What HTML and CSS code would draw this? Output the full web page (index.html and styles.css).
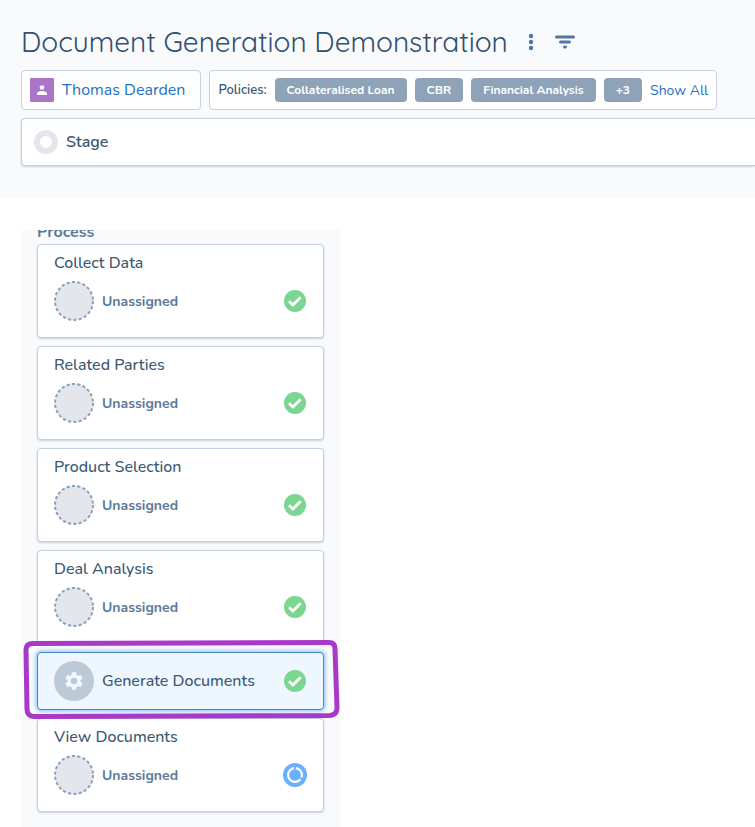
FILE: index.html
```html
<!DOCTYPE html>
<html lang="en">
<head>
  <meta charset="UTF-8" />
  <meta name="viewport" content="width=device-width, initial-scale=1" />
  <title>Document Generation Demonstration</title>
  <link rel="stylesheet" href="styles.css">
</head>
<body>

  <!-- shared icons -->
  <svg class="sprite" aria-hidden="true">
    <symbol id="icon-check" viewBox="0 0 24 24">
      <circle cx="12" cy="12" r="11" fill="#7ad690" />
      <path d="M6 12.2l3.9 3.9 7.8-7.8" fill="none" stroke="#fff" stroke-width="2.8" />
    </symbol>
    <symbol id="icon-progress" viewBox="0 0 24 24">
      <circle cx="12" cy="12" r="12" fill="#68b0ff" />
      <circle cx="12" cy="12" r="6.9" fill="none" stroke="#fff" stroke-width="2.2" />
      <path d="M12 3v4M16.5 14.5l4 2.4" stroke="#68b0ff" stroke-width="1.8" />
    </symbol>
    <symbol id="icon-empty" viewBox="0 0 40 40">
      <circle cx="20" cy="20" r="19" fill="#e3e7ec" stroke="#8aa2bb" stroke-width="2" stroke-dasharray="3.2 2.227" />
    </symbol>
    <symbol id="icon-gear" viewBox="0 0 24 24">
      <path fill="#f0f7ff" d="M19.14 12.94c.04-.3.06-.61.06-.94s-.02-.64-.07-.94l2.03-1.58a.49.49 0 0 0 .12-.61l-1.92-3.32a.488.488 0 0 0-.59-.22l-2.39.96c-.5-.38-1.03-.7-1.62-.94l-.36-2.54a.484.484 0 0 0-.48-.41h-3.84c-.24 0-.43.17-.47.41l-.36 2.54c-.59.24-1.13.57-1.62.94l-2.39-.96c-.22-.08-.47 0-.59.22L2.74 8.87c-.12.21-.08.47.12.61l2.03 1.58c-.05.3-.09.63-.09.94s.02.64.07.94l-2.03 1.58a.49.49 0 0 0-.12.61l1.92 3.32c.12.22.37.29.59.22l2.39-.96c.5.38 1.03.7 1.62.94l.36 2.54c.05.24.24.41.48.41h3.84c.24 0 .44-.17.47-.41l.36-2.54c.59-.24 1.13-.56 1.62-.94l2.39.96c.22.08.47 0 .59-.22l1.92-3.32a.49.49 0 0 0-.12-.61l-2.01-1.58zM12 15.6A3.6 3.6 0 1 1 12 8.4a3.6 3.6 0 0 1 0 7.2z" />
    </symbol>
  </svg>

  <header class="page-header">
    <div class="title-row">
      <h1>Document Generation Demonstration</h1>
      <button class="icon-btn" type="button" aria-label="More options">
        <svg width="6" height="18" viewBox="0 0 6 18" fill="#4a78a8">
          <circle cx="3" cy="3" r="2.2" /><circle cx="3" cy="9" r="2.2" /><circle cx="3" cy="15" r="2.2" />
        </svg>
      </button>
      <button class="icon-btn" type="button" aria-label="Filter">
        <svg width="22" height="14" viewBox="0 0 22 14" fill="none" stroke="#55779d" stroke-width="3" stroke-linecap="round">
          <path d="M2.5 2h17M6.5 7h9M10.5 12h1" />
        </svg>
      </button>
    </div>

    <div class="info-row">
      <div class="box">
        <span class="avatar">
          <svg width="10" height="10" viewBox="0 0 10 10" fill="#fff">
            <circle cx="5" cy="2.5" r="2.3" /><path d="M0 10V8.5C0 6.8 3 6 5 6s5 .8 5 2.5V10z" />
          </svg>
        </span>
        <a class="person" href="#">Thomas Dearden</a>
      </div>
      <div class="box">
        <span class="policies">Policies:</span>
        <span class="tag">Collateralised Loan</span>
        <span class="tag">CBR</span>
        <span class="tag">Financial Analysis</span>
        <span class="tag">+3</span>
        <a class="show-all" href="#">Show All</a>
      </div>
    </div>

    <div class="stage">
      <span class="ring"></span>
      <span>Stage</span>
    </div>
  </header>

  <aside class="process">
    <h2>Process</h2>
    <ul class="tasks">
      <li class="task">
        <h3>Collect Data</h3>
        <div class="task-row">
          <svg class="circle" aria-hidden="true"><use href="#icon-empty" /></svg>
          <span class="assignee">Unassigned</span>
          <svg class="status" role="img" aria-label="Complete"><use href="#icon-check" /></svg>
        </div>
      </li>
      <li class="task">
        <h3>Related Parties</h3>
        <div class="task-row">
          <svg class="circle" aria-hidden="true"><use href="#icon-empty" /></svg>
          <span class="assignee">Unassigned</span>
          <svg class="status" role="img" aria-label="Complete"><use href="#icon-check" /></svg>
        </div>
      </li>
      <li class="task">
        <h3>Product Selection</h3>
        <div class="task-row">
          <svg class="circle" aria-hidden="true"><use href="#icon-empty" /></svg>
          <span class="assignee">Unassigned</span>
          <svg class="status" role="img" aria-label="Complete"><use href="#icon-check" /></svg>
        </div>
      </li>
      <li class="task">
        <h3>Deal Analysis</h3>
        <div class="task-row">
          <svg class="circle" aria-hidden="true"><use href="#icon-empty" /></svg>
          <span class="assignee">Unassigned</span>
          <svg class="status" role="img" aria-label="Complete"><use href="#icon-check" /></svg>
        </div>
      </li>
      <li class="task active">
        <div class="task-row">
          <span class="circle auto"><svg width="22" height="22"><use href="#icon-gear" /></svg></span>
          <h3>Generate Documents</h3>
          <svg class="status" role="img" aria-label="Complete"><use href="#icon-check" /></svg>
        </div>
        <svg class="highlight" viewBox="0 0 318 82" aria-hidden="true">
          <path d="M11 4.5L307 3.5Q313 3.5 313 10L315 69Q315 76 308 76.5L12 77.5Q5 77.5 5 70L4 11Q4 4.5 11 4.5Z" />
        </svg>
      </li>
      <li class="task">
        <h3>View Documents</h3>
        <div class="task-row">
          <svg class="circle" aria-hidden="true"><use href="#icon-empty" /></svg>
          <span class="assignee">Unassigned</span>
          <svg class="status" role="img" aria-label="In progress"><use href="#icon-progress" /></svg>
        </div>
      </li>
    </ul>
  </aside>

</body>
</html>
```

FILE: styles.css
```css
* {
  box-sizing: border-box;
}
body {
  margin: 0;
  background: #fff;
  color: #3b5874;
  font-family: Nunito, "Open Sans", "Noto Sans", sans-serif;
  font-size: 16px;
}
h1, h2, h3, ul {
  margin: 0;
  padding: 0;
  font-weight: normal;
}
a {
  color: #1f6fc4;
  text-decoration: none;
}
.sprite {
  display: block;
  width: 0;
  height: 0;
}

/* header */
.page-header {
  background: #f9fafc;
  padding: 24px 0 32px 21px;
}
.title-row {
  display: flex;
  align-items: center;
  gap: 20px;
  height: 36px;
  margin-bottom: 10px;
}
.title-row h1 {
  color: #2f5070;
  font-family: Quicksand, Lato, sans-serif;
  font-size: 28px;
  font-weight: 450;
  line-height: 36px;
  white-space: nowrap;
}
.icon-btn {
  display: flex;
  padding: 0;
  border: none;
  background: none;
  cursor: pointer;
}
.info-row {
  display: flex;
  gap: 8px;
  margin-bottom: 8px;
}
.box {
  display: flex;
  align-items: center;
  gap: 8px;
  height: 40px;
  padding: 0 8px;
  border: 1px solid #c5d1de;
  border-radius: 4px;
  background: #fff;
  white-space: nowrap;
}
.avatar {
  display: flex;
  align-items: center;
  justify-content: center;
  width: 24px;
  height: 24px;
  background: #ab74c8;
  border-radius: 1px;
}
.person {
  padding-right: 7px;
}
.policies {
  font-size: 13px;
  font-weight: 600;
}
.tag {
  padding: 0 12px;
  border-radius: 4px;
  background: #8ea2b8;
  color: #fff;
  font-size: 12px;
  font-weight: 700;
  line-height: 24px;
}
.show-all {
  font-size: 14px;
}
.stage {
  display: flex;
  align-items: center;
  gap: 8px;
  height: 48px;
  padding-left: 12px;
  border: 1px solid #c5d1de;
  border-right: none;
  border-radius: 4px 0 0 4px;
  background: #fff;
  box-shadow: 0 1px 2px #c5d1de;
  font-weight: 600;
}
.ring {
  width: 24px;
  height: 24px;
  border: 6px solid #e3e7ec;
  border-radius: 50%;
}

/* process list */
.process {
  width: 319px;
  margin: 32px 0 0 21px;
  padding: 0 16px 16px;
  background: #f9fafc;
  overflow: hidden;
}
.process h2 {
  margin: -6px 0 4px;
  color: #5b7a99;
  font-size: 16px;
  font-weight: 700;
  line-height: 16px;
}
.tasks {
  display: flex;
  flex-direction: column;
  gap: 8px;
  list-style: none;
}
.task {
  position: relative;
  padding: 8px 16px 16px;
  border: 1px solid #c5d1de;
  border-radius: 4px;
  background: #fff;
  box-shadow: 0 1px 2px #c5d1de;
}
.task h3 {
  font-size: 16px;
  font-weight: 500;
  line-height: 20px;
}
.task-row {
  display: flex;
  align-items: center;
  gap: 8px;
}
.task > h3 {
  margin-bottom: 8px;
}
.circle {
  width: 40px;
  height: 40px;
}
.circle.auto {
  display: flex;
  align-items: center;
  justify-content: center;
  border-radius: 50%;
  background: #bccad8;
}
.assignee {
  color: #5b7a99;
  font-size: 14px;
  font-weight: 700;
}
.status {
  width: 24px;
  height: 24px;
  margin-left: auto;
}
.task.active {
  z-index: 1;
  padding: 8px 16px;
  border-color: #4c86bd;
  background: #eef7ff;
  box-shadow: 0 0 4px 1px #7fbcff;
}
/* marker frame drawn over the selected task */
.highlight {
  position: absolute;
  top: -14px;
  left: -16px;
  width: 318px;
  height: 82px;
  pointer-events: none;
}
.highlight path {
  fill: none;
  stroke: #a939c8;
  stroke-width: 5;
}
```
